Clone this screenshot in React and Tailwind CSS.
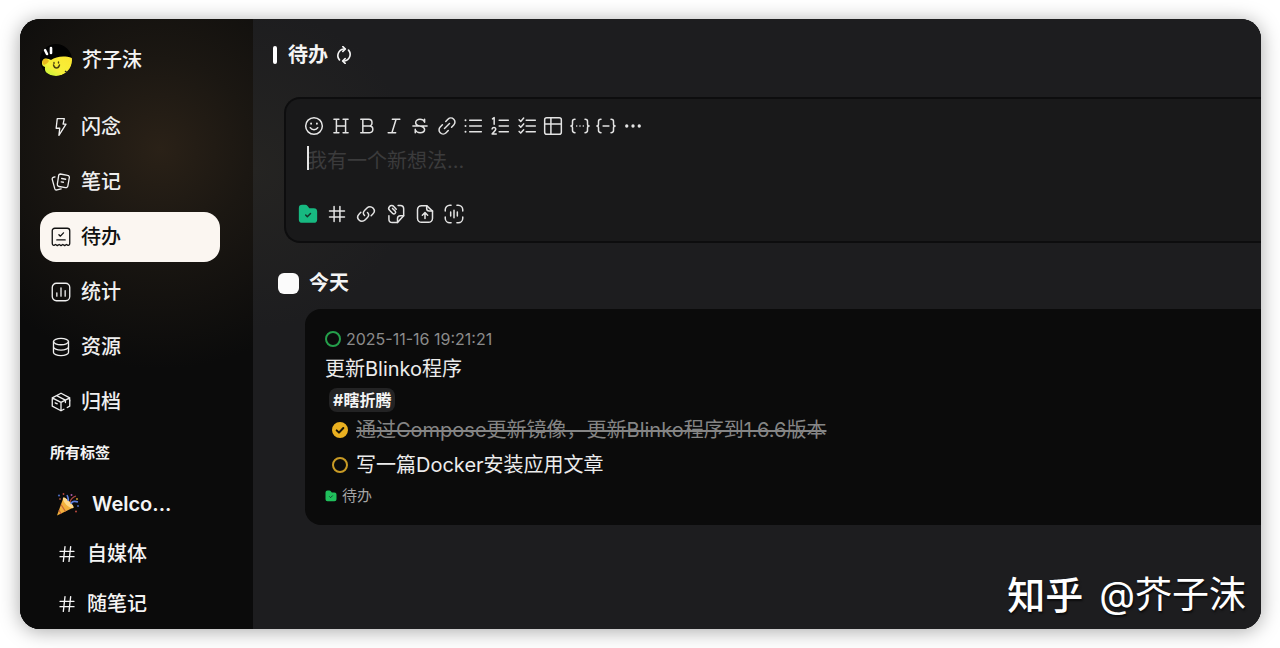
import clsx from "clsx";

function Icon({ children, className, strokeWidth = 1.8 }) {
  return (
    <svg
      viewBox="0 0 24 24"
      fill="none"
      stroke="currentColor"
      strokeWidth={strokeWidth}
      strokeLinecap="round"
      strokeLinejoin="round"
      aria-hidden="true"
      className={clsx("shrink-0", className)}
    >
      {children}
    </svg>
  );
}

const navItems = [
  {
    label: "闪念",
    icon: <path d="M7.5 2h8.500l-1.500 6.500H18L9.500 22l1-8.500H6.200z" />,
  },
  {
    label: "笔记",
    icon: (
      <>
        <path d="M11 2.400 20 4a2.400 2.400 0 0 1 2 2.800l-1.800 10a2.400 2.400 0 0 1-2.800 2L9.600 17.400a2.400 2.400 0 0 1-2-2.800L9.200 4.400A2 2 0 0 1 11 2.400z" />
        <path d="M4.800 5.800 3 6.300A2 2 0 0 0 1.500 8.800l3 11.200a2.200 2.200 0 0 0 2.700 1.500l5-1.300" />
        <path d="m12.800 7.800 4.800.9M12.200 11.800l2.700.5" />
      </>
    ),
  },
  {
    label: "待办",
    active: true,
    icon: (
      <>
        <path d="M1.500 19.500V4.500a3 3 0 0 1 3-3h15a3 3 0 0 1 3 3v15c0 2-1.200 3-2.600 2.200L18.500 21l-2.100 1.300L14.200 21 12 22.300 9.800 21l-2.200 1.300L5.500 21l-1.400.7c-1.400.8-2.600-.2-2.600-2.200z" />
        <path d="m9.500 9.200 1.800 1.800 3.700-4M7 15.500h10" />
      </>
    ),
  },
  {
    label: "统计",
    icon: (
      <>
        <rect x="1.500" y="1.500" width="21" height="21" rx="5" />
        <path d="M7 17v-4M12 17V7M17 17v-6.500" />
      </>
    ),
  },
  {
    label: "资源",
    icon: (
      <>
        <ellipse cx="12" cy="5.500" rx="9" ry="3.800" />
        <path d="M3 5.500v13c0 2 4 3.800 9 3.800s9-1.800 9-3.800v-13" />
        <path d="M3 12c0 2 4 3.800 9 3.800s9-1.800 9-3.800" />
      </>
    ),
  },
  {
    label: "归档",
    icon: (
      <>
        <path d="M22.500 10.500V7L12 1.500 1.500 7v10L12 22.500l3.500-1.800M1.500 7 12 12.500 22.500 7M12 12.500v10M6.800 4.300l10.500 5.400v3" />
        <path d="M22.500 10.500V17l-3 1.600" />
        <path d="m5 13 2.500 1.200" />
      </>
    ),
  },
];

const tags = ["自媒体", "随笔记"];

const formatTools = [
  {
    label: "表情",
    icon: (
      <>
        <circle cx="12" cy="12" r="10" />
        <path d="M7.500 14c1.800 3.300 7.200 3.300 9 0" />
        <path d="M8.500 8.800v.6M15.500 8.800v.6" strokeWidth="2.200" />
      </>
    ),
  },
  {
    label: "标题",
    icon: <path d="M6.500 4v16M17.500 4v16M6.500 12h11M3.500 4h6M14.500 4h6M3.500 20h6M14.500 20h6" />,
  },
  {
    label: "粗体",
    icon: <path d="M4.500 4h9.500a4 4 0 0 1 0 8H7h8a4 4 0 0 1 0 8H4.500M7 4v16" />,
  },
  { label: "斜体", icon: <path d="M10 4h9M5 20h9M14.500 4l-5 16" /> },
  {
    label: "删除线",
    icon: (
      <path d="M3.500 12h17M17.500 7.500V4M17.500 7C16.500 5 14.500 4 12 4 9 4 6.800 5.600 6.800 8c0 2.200 1.700 3.300 5.200 4 3.600.8 5.500 1.800 5.500 4.200 0 2.300-2.300 3.800-5.300 3.800-2.900 0-4.900-1.200-5.900-3.200M6.300 16v4" />
    ),
  },
  {
    label: "链接",
    icon: (
      <>
        <path d="m9 15 6-6" />
        <path d="m10.500 6.500 2.600-2.700a4.900 4.900 0 0 1 7 7l-2.600 2.700M13.500 17.500l-2.600 2.700a4.900 4.900 0 0 1-7-7l2.600-2.700" />
      </>
    ),
  },
  {
    label: "无序列表",
    icon: (
      <>
        <path d="M8 5h14M8 12h14M8 19h14" />
        <path d="M3 5h.01M3 12h.01M3 19h.01" strokeWidth="2.400" />
      </>
    ),
  },
  {
    label: "有序列表",
    icon: <path d="M11 5h11M11 12h11M11 19h11M3 3.500l2-1.500V10M2.500 15.500c.5-2.500 4.500-2.300 4.500.2 0 1.800-2.500 3.200-4.500 5.800h5" />,
  },
  {
    label: "任务列表",
    icon: <path d="M11 5h11M11 12h11M11 19h11M2.500 4.500 4.500 6.500l3.500-4M2.500 11.500l2 2 3.500-4M2.500 18.500l2 2 3.500-4" />,
  },
  {
    label: "表格",
    icon: (
      <>
        <rect x="2" y="2" width="20" height="20" rx="2.500" />
        <path d="M2 9.500h20M9.500 2v20" />
      </>
    ),
  },
  {
    label: "代码块",
    icon: (
      <>
        <path d="M6 4c-2 0-3 .8-3 2.500v3C3 11 2.400 12 1 12c1.400 0 2 1 2 2.500v3C3 19.200 4 20 6 20M18 4c2 0 3 .8 3 2.500v3c0 1.500.6 2.500 2 2.500-1.400 0-2 1-2 2.500v3c0 1.700-1 2.500-3 2.500" />
        <path d="M8 12h.01M12 12h.01M16 12h.01" strokeWidth="2" />
      </>
    ),
  },
  {
    label: "行内代码",
    icon: (
      <path d="M6 4c-2 0-3 .8-3 2.500v3C3 11 2.400 12 1 12c1.400 0 2 1 2 2.500v3C3 19.200 4 20 6 20M18 4c2 0 3 .8 3 2.500v3c0 1.500.6 2.500 2 2.500-1.400 0-2 1-2 2.500v3c0 1.700-1 2.500-3 2.500M8.500 12h7" />
    ),
  },
  {
    label: "更多",
    icon: <path d="M4.500 12h.01M12 12h.01M19.500 12h.01" strokeWidth="4" />,
  },
];

const actionTools = [
  {
    label: "标签",
    icon: <path d="M3 8.500h18M3 15.500h18M8.500 3v18M15.500 3v18" />,
  },
  {
    label: "引用",
    icon: (
      <>
        <path d="M10.200 13.800c-2-2-1.800-4.300 0-6l3-3a5 5 0 0 1 7.200 0c2 2 1.900 5 0 7l-2.200 2.200" />
        <path d="M13.800 10.200c2 2 1.800 4.300 0 6l-3 3a5 5 0 0 1-7.200 0c-2-2-1.900-5 0-7l2.200-2.200" />
      </>
    ),
  },
  {
    label: "附件",
    icon: (
      <>
        <path d="M14.500 1.800h2.700a4 4 0 0 1 4 4V14l-7.400 8.200H7.500a4 4 0 0 1-4-4V14" />
        <path d="M13.800 22.200v-4.700a3.500 3.500 0 0 1 3.500-3.500h3.900" />
        <path d="m12.300 6.300-2.900-3.200a3.400 3.400 0 0 0-5.200-.1c-1.300 1.400-1.200 3.300.1 4.600l3.500 3.500c2.200 2.100 5-.5 3.100-2.700L7.800 5.300" />
      </>
    ),
  },
  {
    label: "上传",
    icon: (
      <>
        <path d="M14 2H8a5 5 0 0 0-5 5v10a5 5 0 0 0 5 5h8a5 5 0 0 0 5-5V8.500z" />
        <path d="M14 2v3.500a3 3 0 0 0 3 3h4M12 17.500v-7M8.800 13.500 12 10.200l3.200 3.300" />
      </>
    ),
  },
  {
    label: "录音",
    icon: (
      <>
        <path d="M1.500 8.500V7a5.500 5.500 0 0 1 5.500-5.500h1.500M15.500 1.500H17A5.500 5.500 0 0 1 22.500 7v1.500M22.500 15.500V17a5.500 5.500 0 0 1-5.500 5.500h-1.500M8.500 22.500H7A5.500 5.500 0 0 1 1.500 17v-1.500" />
        <path d="M8 9.500v5M12 7.500v9M16 9.500v5" />
      </>
    ),
  },
];

const tasks = [
  { id: "t1", text: "通过Compose更新镜像，更新Blinko程序到1.6.6版本", done: true },
  { id: "t2", text: "写一篇Docker安装应用文章", done: false },
];

function FolderIcon({ className }) {
  return (
    <svg viewBox="0 0 24 24" aria-hidden="true" className={clsx("shrink-0", className)}>
      <path
        d="M1 5a4 4 0 0 1 4-4h3.500a4 4 0 0 1 3 1.400L13.600 5H19a4 4 0 0 1 4 4v9.500a4 4 0 0 1-4 4H5a4 4 0 0 1-4-4z"
        fill="currentColor"
      />
      <path
        d="m9.200 13.300 2 2 3.800-3.800"
        fill="none"
        stroke="#14352a"
        strokeWidth="1.800"
        strokeLinecap="round"
        strokeLinejoin="round"
      />
    </svg>
  );
}

function Avatar() {
  return (
    <svg viewBox="0 0 32 32" aria-hidden="true" className="size-8 shrink-0">
      <defs>
        <clipPath id="avatar">
          <circle cx="16" cy="16" r="16" />
        </clipPath>
        <linearGradient id="face" x1="0" y1="1" x2="1" y2="0">
          <stop offset="0" stopColor="#b4f53a" />
          <stop offset="0.400" stopColor="#f6f03a" />
          <stop offset="1" stopColor="#fbe52f" />
        </linearGradient>
      </defs>
      <g clipPath="url(#avatar)">
        <path d="M0 0h32v32H0z" fill="#020202" />
        <path
          d="M3 16c2-3 6-1 8 0 5-3 12-5 21-2v6c-1 7-8 12-16 12-7 0-12-3-11-9-3-1-4-4-2-7z"
          fill="url(#face)"
        />
        <path d="M3 16c2-2 5-1 6 1-1 2-3 3-5 4-2-1-2-3-1-5z" fill="#e9b81e" />
        <path d="m5 6 2 4M11 4v5" stroke="#fff" strokeWidth="2.600" strokeLinecap="round" />
        <path
          d="M13.500 21c1 4 5 4 6 0M14 18.500v1M18.500 18v1"
          fill="none"
          stroke="#4b4210"
          strokeWidth="1.400"
          strokeLinecap="round"
        />
        <path d="m25 27 2 1.500" stroke="#222" strokeWidth="1.500" />
      </g>
    </svg>
  );
}

function PartyPopper() {
  return (
    <svg viewBox="0 0 24 24" aria-hidden="true" className="size-6 shrink-0">
      <path d="M1 23.500 7.500 5.500c3 1 8.500 6 10 10z" fill="#f3b13c" />
      <path d="M7.500 5.500c-2 1 1 5.500 3.500 8 2.500 2 5.800 3.500 6.500 2.300S16 11.500 13 9 9 5 7.500 5.500z" fill="#ffd98a" />
      <path d="m5 12.500 4.500 7M3 18l2 4" stroke="#c9653a" strokeWidth="1.200" />
      <path d="M12 9c1-2 0-4-1-6M15 12c1-3 4-3 7-2" fill="none" stroke="#5b7fe0" strokeWidth="1.500" />
      <path d="M14 10c1-4 3-5 6-6" fill="none" stroke="#b04a44" strokeWidth="1.200" />
      <circle cx="3" cy="3.500" r="1.100" fill="#4a67b8" />
      <circle cx="7.500" cy="2" r="0.900" fill="#b8483f" />
      <circle cx="15.500" cy="3" r="1" fill="#a858a8" />
      <circle cx="21" cy="7" r="0.900" fill="#d6a12c" />
      <circle cx="22" cy="14" r="1" fill="#4a67b8" />
      <circle cx="20" cy="19.500" r="1" fill="#b8483f" />
      <circle cx="4" cy="7" r="0.900" fill="#a34f3b" />
    </svg>
  );
}

function Sidebar() {
  return (
    <aside className="w-[233px] shrink-0 bg-[#0b0b0b] bg-[radial-gradient(circle_at_140px_130px,#2a2117_0px,#1b1712_90px,#0b0b0b_220px)] px-5">
      <div className="mt-[25px] flex h-8 items-center gap-[10px] text-xl font-medium">
        <Avatar />
        <span>芥子沫</span>
      </div>

      <nav className="mt-[26px] flex flex-col gap-[5px]">
        {navItems.map((item) => (
          <a
            key={item.label}
            href="#"
            aria-current={item.active ? "page" : undefined}
            className={clsx(
              "flex h-[50px] w-[180px] items-center gap-[10px] rounded-2xl pl-[11px] text-xl font-medium",
              item.active ? "bg-[#fbf6f1] text-[#111]" : "text-[#efefef]"
            )}
          >
            <Icon className="size-5" strokeWidth={1.6}>
              {item.icon}
            </Icon>
            {item.label}
          </a>
        ))}
      </nav>

      <h2 className="mt-4 pl-[10px] text-[15px] leading-5 font-bold">所有标签</h2>

      <div className="mt-4 text-xl font-medium">
        <a href="#" className="flex h-[50px] items-center gap-3 pl-4 font-semibold">
          <PartyPopper />
          Welco...
        </a>
        {tags.map((tag) => (
          <a key={tag} href="#" className="flex h-[50px] items-center gap-3 pl-[19px]">
            <Icon className="size-4" strokeWidth={2}>
              <path d="M1.500 8h21M1.500 16h21M9 1 6.500 23M17.500 1 15 23" />
            </Icon>
            {tag}
          </a>
        ))}
      </div>
    </aside>
  );
}

function Editor() {
  return (
    <section className="mt-[26px] ml-[31px] rounded-l-2xl border-2 border-r-0 border-[#0d0d0e] bg-[#19191a] py-[17px] text-[#e4e4e4]">
      <div className="ml-[18px] flex w-[339px] justify-between">
        {formatTools.map((tool) => (
          <button key={tool.label} type="button" aria-label={tool.label}>
            <Icon className="size-5">{tool.icon}</Icon>
          </button>
        ))}
      </div>

      <div className="relative mt-2 ml-[21px]">
        <textarea
          aria-label="我有一个新想法"
          placeholder="我有一个新想法..."
          rows={1}
          className="block h-[60px] w-full resize-none text-xl leading-[34px] outline-none placeholder:text-[#3b3b3c]"
        />
        <span className="absolute top-0.5 left-0 h-6 w-0.5 bg-[#e4e4e4]" />
      </div>

      <div className="ml-3 flex w-[166px] justify-between">
        <button type="button" aria-label="待办" className="text-[#17b981]">
          <FolderIcon className="size-5" />
        </button>
        {actionTools.map((tool) => (
          <button key={tool.label} type="button" aria-label={tool.label}>
            <Icon className="size-5">{tool.icon}</Icon>
          </button>
        ))}
      </div>
    </section>
  );
}

function TaskRow({ task }) {
  return (
    <li className="flex h-[35px] items-center gap-2 pl-[7px]">
      <span className="relative size-4">
        <input
          id={task.id}
          type="checkbox"
          defaultChecked={task.done}
          className="peer block size-4 appearance-none rounded-full border-2 border-[#c99b25] checked:border-[#eab020] checked:bg-[#eab020]"
        />
        <Icon
          strokeWidth={3}
          className="pointer-events-none absolute inset-0 hidden size-4 text-[#1a1405] peer-checked:block"
        >
          <path d="m7 12.500 3.500 3.500L17 9" />
        </Icon>
      </span>
      <label
        htmlFor={task.id}
        className={clsx(
          "text-xl whitespace-nowrap",
          task.done ? "text-[#858585] line-through decoration-2" : "text-[#ececec]"
        )}
      >
        {task.text}
      </label>
    </li>
  );
}

function NoteCard() {
  return (
    <article className="mt-[10px] ml-[52px] rounded-l-2xl bg-[#0b0b0b] pt-5 pb-[17px] pl-5">
      <div className="flex h-5 items-center gap-[5px] text-base text-[#8b8b8b]">
        <span className="size-4 rounded-full border-2 border-[#259f4b]" />
        <time>2025-11-16 19:21:21</time>
      </div>
      <p className="mt-1 text-xl leading-8 text-[#ececec]">更新Blinko程序</p>
      <a
        href="#"
        className="mt-[3px] ml-1 block w-fit rounded-lg bg-[#232324] px-1 text-base leading-6 font-bold"
      >
        #瞎折腾
      </a>
      <ul>
        {tasks.map((task) => (
          <TaskRow key={task.id} task={task} />
        ))}
      </ul>
      <div className="mt-[2px] flex h-6 items-center gap-[5px] text-[15px] text-[#a5a5a5]">
        <FolderIcon className="size-3 text-[#20c05c]" />
        待办
      </div>
    </article>
  );
}

export default function App() {
  return (
    <div className="flex min-h-screen bg-white py-[19px] pr-[19px] pl-5 font-['Inter','Noto_Sans_CJK_SC',sans-serif] text-[#f4f4f4]">
      <div className="relative flex min-w-0 flex-1 overflow-hidden rounded-[20px] bg-[#1d1d1f] shadow-[0_2px_20px_rgba(0,0,0,0.35)]">
        <Sidebar />

        <main className="min-w-0 flex-1 bg-[#1d1d1f] bg-[radial-gradient(circle_at_0px_150px,#252422_0px,#1d1d1f_160px)]">
          <header className="mt-5 flex h-8 items-center pl-5">
            <span className="h-[18px] w-1 rounded-full bg-white" />
            <h1 className="ml-[11px] text-xl font-bold">待办</h1>
            <button type="button" aria-label="刷新" className="ml-[7px]">
              <Icon className="size-[18px]" strokeWidth={2.200}>
                <path d="M6 18.500A8.800 8.800 0 0 1 11.500 4H13M18 5.500A8.800 8.800 0 0 1 12.500 20H11" />
                <path d="M10.500.8 13.800 4l-3.300 3.200M13.500 16.800 10.200 20l3.300 3.200" />
              </Icon>
            </button>
          </header>

          <Editor />

          <div className="mt-6 flex h-8 items-center gap-[10px] pl-[25px]">
            <span className="size-[21px] rounded-md bg-[#fbfbfb]" />
            <h2 className="text-xl font-bold">今天</h2>
          </div>

          <NoteCard />
        </main>

        <div className="pointer-events-none absolute right-[15px] bottom-2 flex items-center gap-4 text-[38px] leading-[52px] text-white [text-shadow:1px_2px_2px_rgba(0,0,0,0.6)]">
          <span className="font-medium">知乎</span>
          <span className="text-[37px]">@芥子沫</span>
        </div>
      </div>
    </div>
  );
}
